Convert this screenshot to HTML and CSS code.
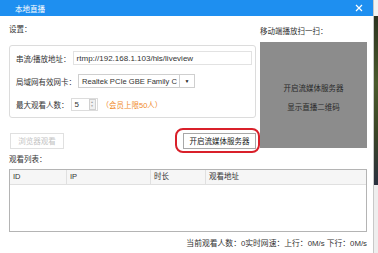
FILE: index.html
```html
<!DOCTYPE html>
<html lang="zh">
<head>
    <meta charset="UTF-8">
    <title>本地直播</title>
    <link rel="stylesheet" href="styles.css">
</head>
<body>
    <div class="dialog">
        <div class="titlebar">
            <span class="title">本地直播</span>
            <svg class="close" width="8" height="8" viewBox="0 0 8 8">
                <path d="M1 1L7 7M7 1L1 7" stroke="#fff" stroke-width="1.2"/>
            </svg>
        </div>

        <div class="content">
            <div class="top">
                <div class="left">
                    <div class="label">设置：</div>
                    <div class="settings">
                        <div class="row">
                            <span>串流/播放地址：</span>
                            <div class="input url">rtmp://192.168.1.103/hls/liveview</div>
                        </div>
                        <div class="row">
                            <span>局域网有效网卡：</span>
                            <div class="select">
                                <span class="select-text">Realtek PCIe GBE Family C</span>
                                <span class="select-arrow">&#9660;</span>
                            </div>
                        </div>
                        <div class="row">
                            <span>最大观看人数：</span>
                            <div class="spin">
                                <span class="spin-value">5</span>
                                <span class="spin-btns">
                                    <span>&#9650;</span>
                                    <span>&#9660;</span>
                                </span>
                            </div>
                            <span class="limit">（会员上限50人）</span>
                        </div>
                    </div>
                    <div class="actions">
                        <button class="btn btn-disabled">浏览器观看</button>
                        <div class="ring">
                            <button class="btn btn-main">开启流媒体服务器</button>
                        </div>
                    </div>
                </div>

                <div class="right">
                    <div class="label label-right">移动端播放扫一扫：</div>
                    <div class="qr">
                        <div>开启流媒体服务器</div>
                        <div>显示直播二维码</div>
                    </div>
                </div>
            </div>

            <div class="label list-label">观看列表：</div>
            <div class="table">
                <div class="thead">
                    <div class="th col-id">ID</div>
                    <div class="th col-ip">IP</div>
                    <div class="th col-time">时长</div>
                    <div class="th col-url">观看地址</div>
                </div>
            </div>

            <div class="status">当前观看人数：0实时网速：上行：0M/s 下行：0M/s</div>
        </div>
    </div>

    <div class="desk">
        <div class="desk-top"></div>
        <div class="desk-pic"></div>
        <div class="desk-bottom"></div>
    </div>
</body>
</html>
```

FILE: styles.css
```css
body {
    margin: 0;
    width: 378px;
    height: 253px;
    overflow: hidden;
    display: flex;
    font-family: "Liberation Sans", "Noto Sans CJK SC", sans-serif;
    font-size: 7.5px;
    color: #333;
}

.dialog {
    width: 373px;
    height: 253px;
    background: #fff;
    border-right: 1px solid #c8c8c8;
    display: flex;
    flex-direction: column;
}

/* title bar */
.titlebar {
    height: 16px;
    flex-shrink: 0;
    background: #1e8ff0;
    color: #fff;
    display: flex;
    align-items: center;
    justify-content: space-between;
    padding: 0 10px 0 15px;
}

.close {
    display: block;
}

.content {
    padding: 8px 6px 0 9px;
    display: flex;
    flex-direction: column;
}

.top {
    display: flex;
    gap: 4px;
}

.left {
    width: 247px;
}

.label {
    height: 12px;
    line-height: 12px;
}

/* settings box */
.settings {
    margin-top: 9px;
    border: 1px solid #dcdcdc;
    border-radius: 3px;
    padding: 5px 3px 6px 6px;
    display: flex;
    flex-direction: column;
    gap: 9px;
}

.row {
    display: flex;
    align-items: center;
    height: 14px;
    gap: 2px;
}

.input {
    height: 14px;
    line-height: 14px;
    border: 1px solid #e2e2e2;
    box-sizing: border-box;
    padding-left: 3px;
    color: #333;
}

.url {
    flex: 1;
    font-size: 8px;
}

.select {
    width: 117px;
    height: 14px;
    box-sizing: border-box;
    border: 1px solid #cfcfcf;
    display: flex;
    align-items: center;
}

.select-text {
    flex: 1;
    white-space: nowrap;
    padding-left: 3px;
    font-size: 7.6px;
}

.select-arrow {
    width: 14px;
    height: 12px;
    border-left: 1px solid #cfcfcf;
    font-size: 5px;
    display: flex;
    align-items: center;
    justify-content: center;
    color: #222;
}

.spin {
    width: 27px;
    height: 13px;
    box-sizing: border-box;
    border: 1px solid #dcdcdc;
    display: flex;
    align-items: center;
}

.spin-value {
    flex: 1;
    padding-left: 3px;
    font-size: 8px;
}

.spin-btns {
    width: 7px;
    height: 11px;
    display: flex;
    flex-direction: column;
    font-size: 3px;
    color: #999;
    background: #f0f0f0;
    border: 1px solid #d0d0d0;
    box-sizing: border-box;
    align-items: center;
    justify-content: space-around;
    margin-right: 1px;
}

.limit {
    color: #f08a2a;
    margin-left: 2px;
}

/* buttons */
.actions {
    margin-top: 10px;
    display: flex;
    align-items: center;
    justify-content: space-between;
    margin-right: -4px;
}

.btn {
    font-family: inherit;
    font-size: 7.5px;
    height: 16px;
    padding: 0;
    background: #fff;
    cursor: pointer;
}

.btn-disabled {
    width: 54px;
    margin-left: 1px;
    border: 1px solid #e0e0e0;
    color: #c4c4c4;
}

.btn-main {
    width: 73px;
    border: 1px solid #a8a8a8;
    color: #222;
}

.ring {
    width: 85px;
    height: 25px;
    box-sizing: border-box;
    border: 2px solid #d9202a;
    border-radius: 8px;
    display: flex;
    align-items: center;
    padding-left: 6px;
}

/* qr panel */
.right {
    width: 107px;
}

.label-right {
    margin-top: 2px;
}

.qr {
    margin-top: 4px;
    height: 106px;
    background: #8c8c8c;
    display: flex;
    flex-direction: column;
    align-items: center;
    justify-content: center;
    gap: 8px;
    color: #2a2a2a;
    padding-top: 4px;
    box-sizing: border-box;
}

/* viewer list */
.list-label {
    margin-top: 1px;
}

.table {
    margin-top: 3px;
    height: 63px;
    border: 1px solid #b4b4b4;
    box-sizing: border-box;
}

.thead {
    display: flex;
    height: 14px;
    background: #f6f6f6;
    border-bottom: 1px solid #e0e0e0;
}

.th {
    line-height: 14px;
    padding-left: 3px;
    border-right: 1px solid #e0e0e0;
    box-sizing: border-box;
}

.col-id { width: 57px; }
.col-ip { width: 84px; }
.col-time { width: 55px; }
.col-url { flex: 1; border-right: none; }

.status {
    margin-top: 5px;
    text-align: right;
    line-height: 14px;
    font-size: 7.8px;
}

/* desktop behind the dialog */
.desk {
    flex: 1;
    display: flex;
    flex-direction: column;
}

.desk-top {
    height: 16px;
    background: #f2f2f2;
}

.desk-pic {
    height: 169px;
    background: linear-gradient(#2c3320, #4a5a2c 40%, #3a4426 70%, #2a3140);
}

.desk-bottom {
    flex: 1;
    background: #eeeeee;
}
```
